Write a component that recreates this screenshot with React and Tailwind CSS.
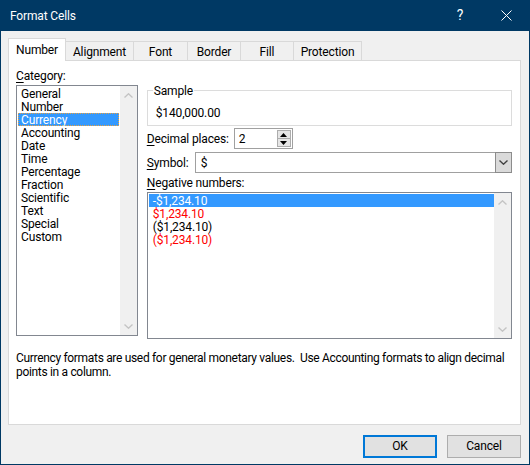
const categories = [
  "General",
  "Number",
  "Currency",
  "Accounting",
  "Date",
  "Time",
  "Percentage",
  "Fraction",
  "Scientific",
  "Text",
  "Special",
  "Custom",
];

const negatives = [
  { label: "-$1,234.10", color: "text-black" },
  { label: "$1,234.10", color: "text-[#ff0000]" },
  { label: "($1,234.10)", color: "text-black" },
  { label: "($1,234.10)", color: "text-[#ff0000]" },
];

const tabs = [
  { label: "Alignment", w: "w-[68px]" },
  { label: "Font", w: "w-[54px]" },
  { label: "Border", w: "w-[53px]" },
  { label: "Fill", w: "w-[53px]" },
  { label: "Protection", w: "w-[68px]" },
];

function Chevron({ up, color = "#c4c4c4" }) {
  return (
    <svg width="9" height="5" viewBox="0 0 9 5">
      <path
        d={up ? "M0.5 4.5 L4.5 0.8 L8.5 4.5" : "M0.5 0.5 L4.5 4.2 L8.5 0.5"}
        fill="none"
        stroke={color}
        strokeWidth="1.4"
      />
    </svg>
  );
}

function ScrollBar() {
  return (
    <div className="w-[17px] bg-[#f0f0f0] flex flex-col justify-between items-center pt-[7px] pb-[6px]">
      <Chevron up />
      <Chevron />
    </div>
  );
}

function Mnemonic({ first, rest }) {
  return (
    <span className="whitespace-nowrap">
      <span className="underline underline-offset-[2px]">{first}</span>
      {rest}
    </span>
  );
}

export default function App() {
  return (
    <div className="w-[530px] h-[465px] flex flex-col text-[12px] tracking-[-0.15px] text-black font-['Segoe_UI','Roboto',sans-serif] select-none">
      {/* title bar */}
      <div className="h-[31px] bg-[#003964] flex items-center text-white">
        <span className="pl-[10px] text-[12px]">Format Cells</span>
        <span className="ml-auto w-[14px] text-center text-[14px] mr-[33px]">?</span>
        <div className="w-[12px] flex justify-center mr-[18px]">
          <svg width="11" height="11" viewBox="0 0 11 11">
            <path d="M0.5 0.5 L10.5 10.5 M10.5 0.5 L0.5 10.5" stroke="white" strokeWidth="1" />
          </svg>
        </div>
      </div>

      <div className="flex-1 bg-[#f0f0f0] border-x border-b border-[#003964] pl-[7px] pr-[8px] pt-[7px] flex flex-col">
        {/* tabs */}
        <div className="flex items-end h-[23px]">
          <div className="relative z-10 w-[58px] h-[23px] bg-white border-x border-t border-[#d9d9d9] flex justify-center pt-[4px] leading-[14px]">
            Number
          </div>
          {tabs.map((t) => (
            <div
              key={t.label}
              className={`${t.w} h-[20px] border-t border-r border-[#d9d9d9] flex justify-center pt-[3px] leading-[14px]`}
            >
              {t.label}
            </div>
          ))}
        </div>

        {/* panel */}
        <div className="-mt-px h-[365px] bg-white border border-[#d9d9d9] pl-[7px] pr-[8px] pt-[8px] flex flex-col">
          <div className="flex gap-[9px] items-start">
            {/* category */}
            <div className="w-[122px] flex flex-col">
              <div className="leading-[15px] h-[13px]">
                <Mnemonic first="C" rest="ategory:" />
              </div>
              <div className="mt-[3px] h-[251px] border border-[#828790] flex">
                <div className="flex-1 pt-[1px] flex flex-col">
                  {categories.map((c) =>
                    c === "Currency" ? (
                      <div
                        key={c}
                        className="mx-[1px] h-[13px] leading-[12px] bg-[#3399ff] text-white pl-[2px] border border-dotted border-[#e8a040]"
                      >
                        {c}
                      </div>
                    ) : (
                      <div key={c} className="mx-[1px] h-[13px] leading-[15px] pl-[3px]">
                        {c}
                      </div>
                    )
                  )}
                </div>
                <ScrollBar />
              </div>
            </div>

            {/* right side */}
            <div className="w-[366px] mt-[21px] flex flex-col">
              <div className="relative h-[36px] border border-[#dcdcdc] pl-[8px] pt-[16px] leading-[13px]">
                <span className="absolute -top-[6px] left-[5px] bg-white px-[1px] leading-[13px]">Sample</span>
                $140,000.00
              </div>

              <div className="mt-[2px] h-[21px] flex items-center">
                <div className="w-[87px] pt-[1px]">
                  <Mnemonic first="D" rest="ecimal places:" />
                </div>
                <div className="w-[59px] h-[21px] border border-[#a0a0a0] flex">
                  <div className="flex-1 pl-[4px] leading-[20px]">2</div>
                  <div className="w-[16px] flex flex-col p-[1px] gap-0">
                    <div className="flex-1 bg-[#e6e6e6] border border-[#adadad] flex items-center justify-center">
                      <svg width="7" height="4" viewBox="0 0 7 4">
                        <path d="M0 4 L3.5 0 L7 4 Z" fill="black" />
                      </svg>
                    </div>
                    <div className="flex-1 bg-[#e6e6e6] border border-t-0 border-[#adadad] flex items-center justify-center">
                      <svg width="7" height="4" viewBox="0 0 7 4">
                        <path d="M0 0 L3.5 4 L7 0 Z" fill="black" />
                      </svg>
                    </div>
                  </div>
                </div>
              </div>

              <div className="mt-[3px] h-[21px] flex items-center">
                <div className="w-[48px] pt-[1px]">
                  <Mnemonic first="S" rest="ymbol:" />
                </div>
                <div className="flex-1 h-[21px] border border-[#a0a0a0] flex">
                  <div className="flex-1 pl-[5px] leading-[20px]">$</div>
                  <div className="w-[17px] -my-px -mr-px bg-[#dadada] border border-[#8c8c8c] flex items-center justify-center">
                    <Chevron color="#404040" />
                  </div>
                </div>
              </div>

              <div className="mt-[3px] h-[13px] leading-[15px]">
                <Mnemonic first="N" rest="egative numbers:" />
              </div>
              <div className="mt-[3px] h-[147px] border border-[#828790] flex">
                <div className="flex-1 pt-[1px] flex flex-col">
                  {negatives.map((n, i) =>
                    i === 0 ? (
                      <div key={i} className="ml-[1px] h-[13px] leading-[14px] bg-[#3399ff] text-white pl-[4px]">
                        {n.label}
                      </div>
                    ) : (
                      <div key={i} className={`ml-[1px] h-[13px] leading-[14px] pl-[4px] ${n.color}`}>
                        {n.label}
                      </div>
                    )
                  )}
                </div>
                <ScrollBar />
              </div>
            </div>
          </div>

          <p className="mt-[12px] leading-[14px] whitespace-pre tracking-[-0.32px]">
            {"Currency formats are used for general monetary values.  Use Accounting formats to align decimal"}
            <br />
            points in a column.
          </p>
        </div>

        {/* buttons */}
        <div className="mt-[10px] flex justify-end gap-[10px]">
          <button className="w-[74px] h-[23px] bg-[#e1e1e1] border-2 border-[#0078d7] leading-[19px]">OK</button>
          <button className="w-[74px] h-[23px] bg-[#e1e1e1] border border-[#adadad] leading-[21px]">Cancel</button>
        </div>
      </div>
    </div>
  );
}
